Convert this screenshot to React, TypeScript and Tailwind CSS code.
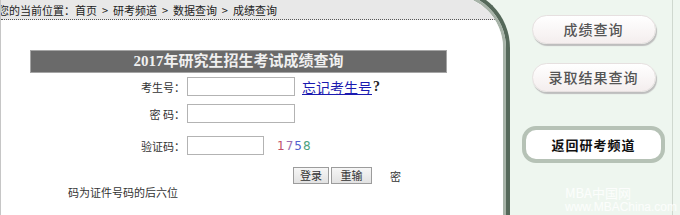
const SANS = "font-['Noto_Sans_CJK_SC',sans-serif]";

/** One label + input row of the score lookup form. */
function FieldRow({
  label,
  inputWidth,
  className,
  children,
}: {
  label: string;
  inputWidth: string;
  className: string;
  children?: React.ReactNode;
}) {
  return (
    <div className={`flex items-center ${className}`}>
      <span className="w-[184px] whitespace-pre text-right text-[11px] leading-[16px] text-[#333]">
        {label}
      </span>
      <input
        type="text"
        className={`ml-[2px] h-[19px] ${inputWidth} border border-[#b3b3b3] bg-white outline-none`}
      />
      {children}
    </div>
  );
}

function PillButton({ label }: { label: string }) {
  return (
    <button
      type="button"
      className="flex h-[29px] w-[124px] items-center justify-center rounded-full border border-[#e6e0e0] bg-gradient-to-b from-white to-[#f4eeee] text-[14px] font-medium tracking-[1px] text-[#555] shadow-[1px_2px_1px_#bdbdbd]"
    >
      {label}
    </button>
  );
}

function SmallButton({ label, width }: { label: string; width: string }) {
  return (
    <button
      type="button"
      className={`flex h-[17px] ${width} items-center justify-center border border-[#9c9c9c] bg-gradient-to-b from-[#f6f6f6] to-[#e2e2e2] text-[11px] leading-none text-[#333]`}
    >
      {label}
    </button>
  );
}

export default function App() {
  return (
    <div className={`flex h-[215px] w-[680px] overflow-hidden bg-[#eef6ef] ${SANS}`}>
      {/* left panel with the curved dark green edge */}
      <div className="-mt-[12px] w-[510px] shrink-0 rounded-tr-[60px] border-r-4 border-t-4 border-[#55695a]">
        <div className="h-full rounded-tr-[56px] border-r-[3px] border-t-[3px] border-[#a7b3a8]">
          <div className="h-full overflow-hidden rounded-tr-[53px] border-l border-[#c6c6c6] bg-white">
            {/* breadcrumb */}
            <div className="flex h-[25px] items-end border-b border-dotted border-[#555] bg-[#e8e8e8] pb-[1px]">
              <span className="-ml-[3px] whitespace-pre text-[11px] leading-[16px] text-[#222]">
                {"您的当前位置：首页  >  研考频道  >  数据查询  >  成绩查询"}
              </span>
            </div>

            {/* form title */}
            <div className="ml-[29px] mt-[30px] flex h-[23px] w-[417px] items-center justify-center border border-[#a5a5a5] bg-[#6a6a6a]">
              <span className="font-['Liberation_Serif','Noto_Sans_CJK_SC',serif] text-[15px] font-bold leading-none text-[#f0f0f0]">
                2017年研究生招生考试成绩查询
              </span>
            </div>

            <FieldRow label="考生号：" inputWidth="w-[108px]" className="mt-[4px]">
              <a href="#" className="ml-[7px] text-[14px] leading-[18px] text-[#1a1ab0] underline">
                忘记考生号
              </a>
              <span className="ml-[1px] font-['Liberation_Serif',serif] text-[14px] font-bold leading-[18px] text-[#222]">
                ?
              </span>
            </FieldRow>

            <FieldRow label="密 码：" inputWidth="w-[108px]" className="mt-[8px]" />

            <FieldRow label="验证码：" inputWidth="w-[77px]" className="mt-[13px]">
              <span className="ml-[13px] font-['DejaVu_Sans',sans-serif] text-[12px] leading-none tracking-[1px]">
                <span className="text-[#c24f6c]">1</span>
                <span className="text-[#9a6db0]">7</span>
                <span className="text-[#4f62cf]">5</span>
                <span className="text-[#4aa27e]">8</span>
              </span>
            </FieldRow>

            <div className="mt-[12px] flex items-center pl-[292px]">
              <SmallButton label="登录" width="w-[36px]" />
              <span className="w-[2px]" />
              <SmallButton label="重输" width="w-[41px]" />
              <span className="ml-[18px] text-[11px] leading-[16px] text-[#333]">密</span>
            </div>
            <div className="mt-[1px] pl-[67px] text-[11px] leading-[14px] text-[#333]">
              码为证件号码的后六位
            </div>
          </div>
        </div>
      </div>

      {/* right column of quick links */}
      <div className="flex w-[163px] shrink-0 flex-col items-center border-r border-[#cfd8cf] pl-[5px] pt-[15px]">
        <PillButton label="成绩查询" />
        <div className="mt-[19px]">
          <PillButton label="录取结果查询" />
        </div>
        <button
          type="button"
          className="mt-[34px] flex h-[37px] w-[143px] items-center justify-center rounded-[14px] border-4 border-[#b6c2b6] bg-white text-[13px] font-bold tracking-[1px] text-[#111]"
        >
          返回研考频道
        </button>
        <div className="mt-[22px] self-start pl-[50px] text-white/80">
          <div className="text-[13px] leading-[15px]">MBA中国网</div>
          <div className="mt-[1px] font-['Liberation_Sans',sans-serif] text-[12px] leading-[13px]">
            www.MBAChina.com
          </div>
        </div>
      </div>
    </div>
  );
}
